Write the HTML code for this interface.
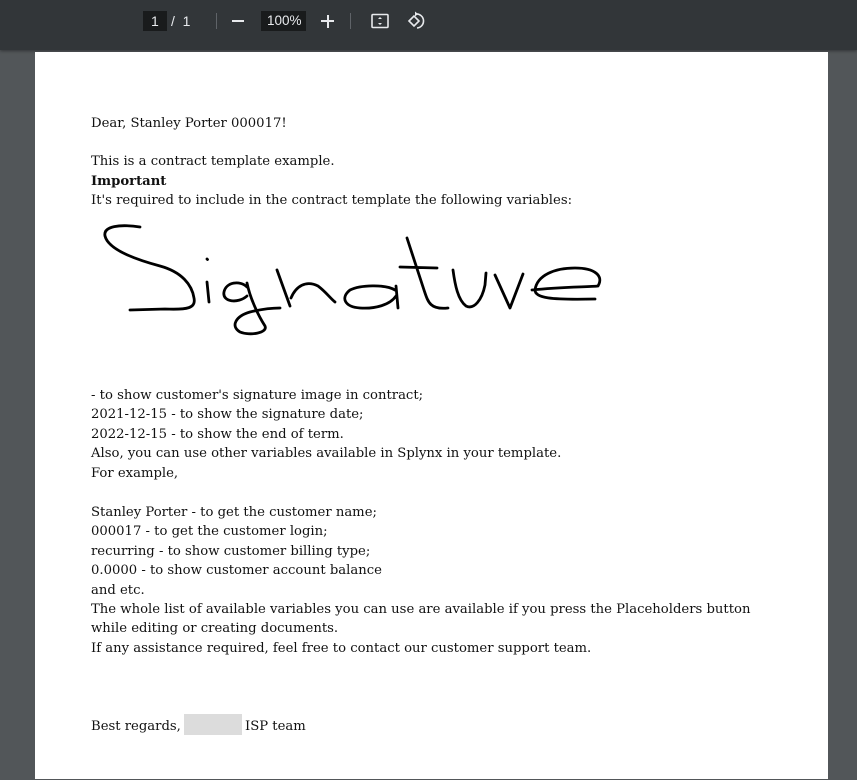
<!DOCTYPE html>
<html><head><meta charset="utf-8"><style>
html,body{margin:0;padding:0;width:857px;height:780px;overflow:hidden;background:#525659;}
.tb{position:absolute;left:0;top:0;width:857px;height:50px;background:#323639;box-shadow:0 1px 3px rgba(0,0,0,.4);}
.tbt{position:absolute;color:#e8eaed;font-family:"Liberation Sans",sans-serif;font-size:14px;line-height:20px;}
.page{position:absolute;left:35px;top:52px;width:793px;height:727px;background:#fff;}
.l{position:absolute;left:91px;font-family:"DejaVu Serif",serif;font-size:13.2px;line-height:20px;color:#111;white-space:nowrap;margin-top:1.5px;}
.sep{position:absolute;top:13px;width:1px;height:16px;background:#5f6368;}
</style></head><body>
<div class="tb">
  <div style="position:absolute;left:143px;top:11px;width:24px;height:20px;background:#191b1c;"></div>
  <div class="tbt" style="left:151px;top:11px;">1</div>
  <div class="tbt" style="left:171px;top:11px;">/&nbsp;&nbsp;1</div>
  <div class="sep" style="left:216px;"></div>
  <div style="position:absolute;left:232px;top:20px;width:12px;height:2px;background:#e8eaed;"></div>
  <div style="position:absolute;left:261px;top:11px;width:45px;height:20px;background:#191b1c;"></div>
  <div class="tbt" style="left:267px;top:11px;font-size:13.5px">100%</div>
  <div style="position:absolute;left:321px;top:20px;width:13px;height:2px;background:#e8eaed;"></div>
  <div style="position:absolute;left:326.5px;top:14.5px;width:2px;height:13px;background:#e8eaed;"></div>
  <div class="sep" style="left:350px;"></div>
  <svg style="position:absolute;left:370px;top:11px" width="20" height="20" viewBox="0 0 20 20"><rect x="2" y="3.5" width="16" height="13" rx="1" fill="none" stroke="#e8eaed" stroke-width="1.6"/><path d="M10 6l-2 2h4zM10 14l-2-2h4z" fill="#e8eaed"/></svg>
  <svg style="position:absolute;left:406px;top:10px" width="22" height="22" viewBox="0 0 22 22"><path d="M3 11l5-5 5 5-5 5z" fill="none" stroke="#e8eaed" stroke-width="1.6"/><path d="M10 4a7 7 0 1 1 1 14" fill="none" stroke="#e8eaed" stroke-width="1.6"/><path d="M9 1.5l3 2.5-3 2.5z" fill="#e8eaed"/></svg>
</div>
<div class="page"></div>
<div class="l" style="top:112px">Dear, Stanley Porter 000017!</div>
<div class="l" style="top:150px">This is a contract template example.</div>
<div class="l" style="top:170px;font-weight:bold">Important</div>
<div class="l" style="top:189px">It's required to include in the contract template the following variables:</div>
<svg style="position:absolute;left:0;top:0" width="857" height="780"><g fill="none" stroke="#000" stroke-width="2.8" stroke-linecap="round" stroke-linejoin="round">
<path d="M140 227 C120 224 103 226 105 236 C108 248 130 258 160 266 C182 272 192 285 194 298 C196 308 188 310 165 309 L130 310"/>
<path d="M207 259 l0.5 0.5"/>
<path d="M207 282 L209 302"/>
<path d="M247 287 C240 280 226 282 224 292 C222 302 238 304 247 296 M247 283 C250 298 258 315 265 326 C268 333 250 336 240 332 C230 326 236 316 250 312 C262 309 272 308 280 308"/>
<path d="M277 270 L290 306 M291 298 C296 286 306 280 318 286 C326 292 330 298 335 302"/>
<path d="M395 290 C385 284 360 285 350 290 C340 298 345 307 360 308 C375 309 390 305 396 296 M396 286 L398 308"/>
<path d="M407 238 L424 290 C428 302 430 310 448 308 M400 267 L437 268"/>
<path d="M453 270 C455 285 458 300 466 306 C474 310 482 300 485 285 L486 273"/>
<path d="M495 275 L510 308 L523 274"/>
<path d="M532 290 C560 287 588 287 598 286 C604 276 595 268 575 268 C555 268 537 275 535 290 C535 298 550 300 595 299"/>
</g></svg>
<div class="l" style="top:384px">- to show customer's signature image in contract;</div>
<div class="l" style="top:403px">2021-12-15 - to show the signature date;</div>
<div class="l" style="top:423px">2022-12-15 - to show the end of term.</div>
<div class="l" style="top:442px">Also, you can use other variables available in Splynx in your template.</div>
<div class="l" style="top:462px">For example,</div>
<div class="l" style="top:501px">Stanley Porter - to get the customer name;</div>
<div class="l" style="top:520px">000017 - to get the customer login;</div>
<div class="l" style="top:540px">recurring - to show customer billing type;</div>
<div class="l" style="top:559px">0.0000 - to show customer account balance</div>
<div class="l" style="top:579px">and etc.</div>
<div class="l" style="top:598px">The whole list of available variables you can use are available if you press the Placeholders button</div>
<div class="l" style="top:617px">while editing or creating documents.</div>
<div class="l" style="top:637px">If any assistance required, feel free to contact our customer support team.</div>
<div style="position:absolute;left:184px;top:714px;width:58px;height:21px;background:#dcdcdc;"></div>
<div class="l" style="top:715px">Best regards,</div>
<div class="l" style="top:715px;left:245px">ISP team</div>
</body></html>
